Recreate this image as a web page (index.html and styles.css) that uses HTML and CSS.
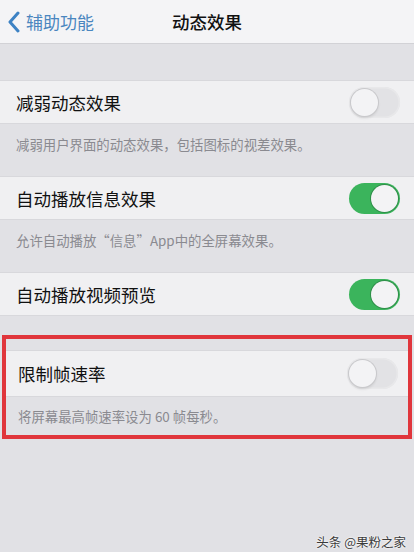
FILE: index.html
```html
<!DOCTYPE html>
<html lang="zh-CN">
<head>
    <meta charset="UTF-8">
    <meta name="viewport" content="width=device-width, initial-scale=1.0">
    <title>动态效果</title>
    <link rel="stylesheet" href="styles.css">
</head>
<body>

    <!-- Navigation bar -->
    <div class="nav">
        <div class="back">
            <svg class="chevron" width="14" height="22" viewBox="0 0 14 22">
                <path d="M11 2 L3 11 L11 20" fill="none" stroke="#3d82c4" stroke-width="3" stroke-linecap="round" stroke-linejoin="round"/>
            </svg>
            <span>辅助功能</span>
        </div>
        <div class="title">动态效果</div>
    </div>

    <div class="spacer"></div>

    <div class="row">
        <span class="label">减弱动态效果</span>
        <span class="toggle"></span>
    </div>
    <div class="note">减弱用户界面的动态效果，包括图标的视差效果。</div>

    <div class="row">
        <span class="label">自动播放信息效果</span>
        <span class="toggle on"></span>
    </div>
    <div class="note">允许自动播放“信息”App中的全屏幕效果。</div>

    <div class="row">
        <span class="label">自动播放视频预览</span>
        <span class="toggle on"></span>
    </div>

    <div class="gap"></div>

    <!-- Highlighted group -->
    <div class="highlight">
        <div class="inner-gap"></div>
        <div class="row tall">
            <span class="label">限制帧速率</span>
            <span class="toggle"></span>
        </div>
        <div class="note short">将屏幕最高帧速率设为 60 帧每秒。</div>
    </div>

    <div class="watermark">头条 @果粉之家</div>

</body>
</html>
```

FILE: styles.css
```css
body {
    margin: 0;
    font-family: "Noto Sans CJK SC", "Noto Sans", sans-serif;
    background: #e1e1e5;
    color: #111;
}
.nav {
    height: 43px;
    background: #f4f4f6;
    border-bottom: 1px solid #d2d2d6;
    display: flex;
    align-items: center;
    position: relative;
}
.back {
    display: flex;
    align-items: center;
    padding-left: 7px;
    color: #4a86bf;
    font-size: 17px;
}
.back span {
    margin-left: 5px;
}
.title {
    position: absolute;
    left: 0;
    right: 0;
    text-align: center;
    font-size: 17.5px;
    font-weight: 500;
    pointer-events: none;
}
.spacer {
    height: 36px;
}
.row {
    height: 42px;
    background: #f0f0f2;
    border-top: 1px solid #d8d8dc;
    border-bottom: 1px solid #d8d8dc;
    display: flex;
    align-items: center;
    justify-content: space-between;
    padding: 0 14px 0 16px;
}
.label {
    font-size: 17.5px;
}
.note {
    font-size: 13.4px;
    color: #8a8a90;
    padding: 10px 16px 22px;
}
.toggle {
    width: 51px;
    height: 31px;
    border-radius: 16px;
    background: #e2e2e5;
    box-shadow: inset 0 0 0 1.5px #e8e8ea;
    position: relative;
}
.toggle::after {
    content: "";
    position: absolute;
    top: 2px;
    left: 2px;
    width: 27px;
    height: 27px;
    border-radius: 50%;
    background: #f3f3f5;
    box-shadow: 0 0 0 1px #c9c9cc, 0 2px 3px rgba(0, 0, 0, 0.12);
}
.toggle.on {
    background: #3bb45c;
    box-shadow: none;
}
.toggle.on::after {
    left: 22px;
    box-shadow: 0 0 0 1px #2f8f49;
}
.gap {
    height: 19px;
}
.highlight {
    border: 4px solid #e0363c;
    margin: 0 2px;
}
.inner-gap {
    height: 11px;
}
.highlight .row {
    padding: 0 10px 0 12px;
}
.row.tall {
    height: 45px;
}
.note.short {
    padding: 9px 12px 9px;
}
.watermark {
    text-align: right;
    font-size: 12.5px;
    color: #3a3a3a;
    padding: 93px 8px 0 0;
    text-shadow: 0 0 2px #fff, 0 0 2px #fff;
}
```
